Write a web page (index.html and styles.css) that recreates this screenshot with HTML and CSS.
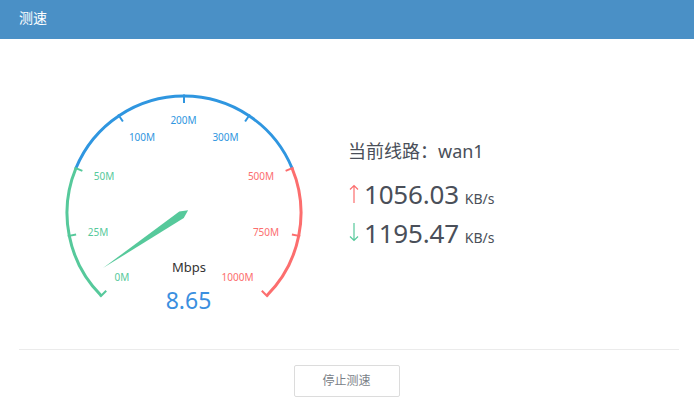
FILE: index.html
```html
<!DOCTYPE html>
<html>
<head>
    <meta charset='utf-8'>
    <title>测速</title>
    <link rel="stylesheet" href="styles.css">
</head>
<body>
<div class="panel">
    <div class="panel_head">测速</div>
    <div class="panel_body">
        <div class="speed_main">
            <!-- 仪表盘：中心 (150,153)，半径 117，起始角 225° 结束角 -45° -->
            <svg class="gauge" width="300" height="270" viewBox="0 0 300 270">
                <path class="arc green" d="M67.27 235.73 A117 117 0 0 1 41.91 108.23"/>
                <path class="arc blue" d="M41.91 108.23 A117 117 0 0 1 258.09 108.23"/>
                <path class="arc red" d="M258.09 108.23 A117 117 0 0 1 232.73 235.73"/>

                <line class="tick green" x1="66.21" y1="236.79" x2="72.22" y2="230.78"/>
                <line class="tick green" x1="33.78" y1="176.12" x2="42.11" y2="174.46"/>
                <line class="tick green" x1="40.52" y1="107.65" x2="48.37" y2="110.90"/>
                <line class="tick blue" x1="84.16" y1="54.47" x2="88.88" y2="61.53"/>
                <line class="tick blue" x1="150" y1="34.5" x2="150" y2="43"/>
                <line class="tick blue" x1="215.84" y1="54.47" x2="211.12" y2="61.53"/>
                <line class="tick red" x1="259.48" y1="107.65" x2="251.63" y2="110.90"/>
                <line class="tick red" x1="266.22" y1="176.12" x2="257.89" y2="174.46"/>
                <line class="tick red" x1="233.79" y1="236.79" x2="227.78" y2="230.78"/>

                <text class="label t_green" x="88" y="221">0M</text>
                <text class="label t_green" x="64" y="176">25M</text>
                <text class="label t_green" x="70" y="119.5">50M</text>
                <text class="label t_blue" x="108" y="81">100M</text>
                <text class="label t_blue" x="149.5" y="64">200M</text>
                <text class="label t_blue" x="191.5" y="81">300M</text>
                <text class="label t_red" x="227" y="119.5">500M</text>
                <text class="label t_red" x="232" y="176">750M</text>
                <text class="label t_red" x="203.5" y="221">1000M</text>

                <polygon class="pointer" points="154.1,150.2 149.8,158.0 69.0,208.1 145.3,151.4"/>

                <text class="unit" x="155" y="212">Mbps</text>
                <text class="value" x="154.5" y="249">8.65</text>
            </svg>

            <div class="speed_info">
                <div class="line_name">当前线路：wan1</div>
                <div class="rate">
                    <svg class="arrow up" width="12" height="19" viewBox="0 0 12 19">
                        <path d="M6 19 V1.5 M2 5.5 L6 1.5 L10 5.5"/>
                    </svg><span class="num">1056.03</span><span class="kb">KB/s</span>
                </div>
                <div class="rate">
                    <svg class="arrow down" width="12" height="19" viewBox="0 0 12 19">
                        <path d="M6 0 V17.5 M2 13.5 L6 17.5 L10 13.5"/>
                    </svg><span class="num">1195.47</span><span class="kb">KB/s</span>
                </div>
            </div>
        </div>

        <div class="speed_foot">
            <a href="#" class="btn">停止测速</a>
        </div>
    </div>
</div>
</body>
</html>
```

FILE: styles.css
```css
body,div,span,a{ outline: 0;margin:0;padding:0 }
a{text-decoration: none;}
html{line-height:1;}
body {
    font-family: "Noto Sans","Noto Sans CJK SC",sans-serif;
    background: #fff;
    width: 694px; height: 419px; overflow: hidden;
}
*{box-sizing: border-box;}

/* 标题栏 */
.panel_head{
    height: 39px; line-height: 36px;
    padding-left: 19px;
    background: #4a90c6; color: #fff;
    font-size: 14px;
}
.panel_body{ padding: 21px 15px 0 19px; }

/* 仪表盘 + 右侧信息 */
.speed_main{ display: flex; align-items: flex-start; }
.gauge{ display: block; margin-left: 15px; }
.gauge .arc{ fill: none; stroke-width: 3; }
.gauge .tick{ stroke-width: 2; }
.gauge .green{ stroke: #56c99b; }
.gauge .blue{ stroke: #2f96e0; }
.gauge .red{ stroke: #fc6e6e; }
.gauge .label{ font-size: 10px; text-anchor: middle; }
.gauge .t_green{ fill: #56c99b; }
.gauge .t_blue{ fill: #2f96e0; }
.gauge .t_red{ fill: #fc6e6e; }
.gauge .pointer{ fill: #56c99b; }
.gauge .unit{ font-size: 13px; fill: #333; text-anchor: middle; }
.gauge .value{ font-size: 23px; fill: #3b8fe0; text-anchor: middle; }

.speed_info{ margin: 79px 0 0 14px; color: #4a4f59; }
.line_name{ font-size: 18px; line-height: 24px; margin-bottom: 14px; }
.rate{ font-size: 26px; line-height: 34px; white-space: nowrap; }
.rate .arrow{ vertical-align: baseline; margin: 0 4px 1px 0; }
.rate .arrow path{ fill: none; stroke-width: 1.2; }
.rate .up path{ stroke: #fc6e6e; }
.rate .down path{ stroke: #56c99b; }
.rate .num{ letter-spacing: -0.2px; }
.rate .kb{ font-size: 14px; margin-left: 6px; }

/* 底部按钮 */
.speed_foot{
    margin: 19px 0 0 0;
    border-top: 1px solid #ebebeb;
    padding: 15px 5px 0 0;
    width: 660px;
    display: flex; justify-content: center;
}
.btn{
    display: block; width: 106px; height: 32px; line-height: 30px;
    border: 1px solid #dcdcdc; border-radius: 2px;
    text-align: center; font-size: 12px; color: #7a7f88;
}
```
